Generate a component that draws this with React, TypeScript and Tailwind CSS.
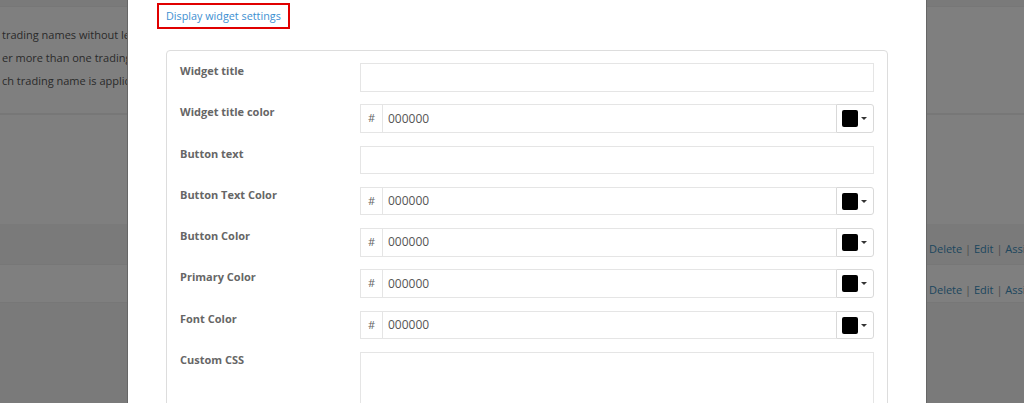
const colorRows = new Set(["Widget title color", "Button Text Color", "Button Color", "Primary Color", "Font Color"]);

const fields = [
  "Widget title",
  "Widget title color",
  "Button text",
  "Button Text Color",
  "Button Color",
  "Primary Color",
  "Font Color",
];

function ColorInput() {
  return (
    <div className="flex h-[28.5px] w-full">
      <span className="w-[23px] shrink-0 flex items-center justify-center border border-[#e5e5e5] text-[11px] text-[#666]">
        #
      </span>
      <div className="flex-1 flex items-center pl-[5px] border-y border-[#e5e5e5] text-[12px] text-[#555]">
        000000
      </div>
      <button className="w-[38px] shrink-0 flex items-center gap-[3px] pl-[5px] border border-[#d9d9d9] rounded-r-[3px] bg-white">
        <span className="w-[16px] h-[17px] rounded-[2px] bg-black" />
        <span className="w-0 h-0 border-x-[3px] border-x-transparent border-t-[3px] border-t-[#333]" />
      </button>
    </div>
  );
}

function RowActions() {
  return (
    <div className="w-[95px] text-[11px] text-[#3c8dbc] whitespace-nowrap overflow-hidden">
      Delete <span className="text-[#999]">|</span> Edit{" "}
      <span className="text-[#999]">|</span> Assi
    </div>
  );
}

export default function App() {
  return (
    <div
      className="relative h-[403px] w-[1024px] overflow-hidden bg-white"
      style={{ fontFamily: '"Open Sans", sans-serif' }}
    >
      {/* page behind the modal */}
      <div className="flex flex-col h-full">
        <div className="h-[7px] bg-[#f5f5f5] border-b border-[#eee]" />
        <div className="h-[108px] pt-[16px] pl-[2px] text-[11px] leading-[23px] text-[#555] border-b-2 border-[#eee]">
          <p>trading names without leaving</p>
          <p>er more than one trading name</p>
          <p>ch trading name is applicable</p>
        </div>
        <div className="h-[109px]" />
        <div className="h-[40px] bg-[#f5f5f5] flex items-center justify-end pt-[10px]">
          <RowActions />
        </div>
        <div className="h-[39px] flex items-center justify-end pt-[14px] border-y border-[#eee]">
          <RowActions />
        </div>
        <div className="flex-1 bg-[#f5f5f5]" />
      </div>

      {/* backdrop */}
      <div className="absolute inset-0 bg-black/50" />

      {/* modal */}
      <div className="absolute left-[127px] top-0 bottom-0 w-[800px] bg-white border-x border-[#666] px-[38px]">
        <div className="flex pt-[3px]">
          <span className="-ml-[9px] border-2 border-[#e00000] h-[26px] px-[7px] leading-[21px] text-[10.8px] text-[#3d8fd1]">
            Display widget settings
          </span>
        </div>

        <div className="mt-[21px] border border-[#ddd] rounded-[4px] pt-[12px] px-[13px]">
          {fields.map((label) => (
            <div key={label} className="flex mb-[12.8px]">
              <label className="w-[180px] shrink-0 text-[11px] font-bold text-[#666] leading-[16px]">
                {label}
              </label>
              <div className="flex-1">
                {colorRows.has(label) ? (
                  <ColorInput />
                ) : (
                  <div className="h-[28.5px] border border-[#e5e5e5]" />
                )}
              </div>
            </div>
          ))}
          <div className="flex">
            <label className="w-[180px] shrink-0 text-[11px] font-bold text-[#666] leading-[16px]">
              Custom CSS
            </label>
            <div className="flex-1 h-[80px] border border-[#e5e5e5]" />
          </div>
        </div>
      </div>
    </div>
  );
}
